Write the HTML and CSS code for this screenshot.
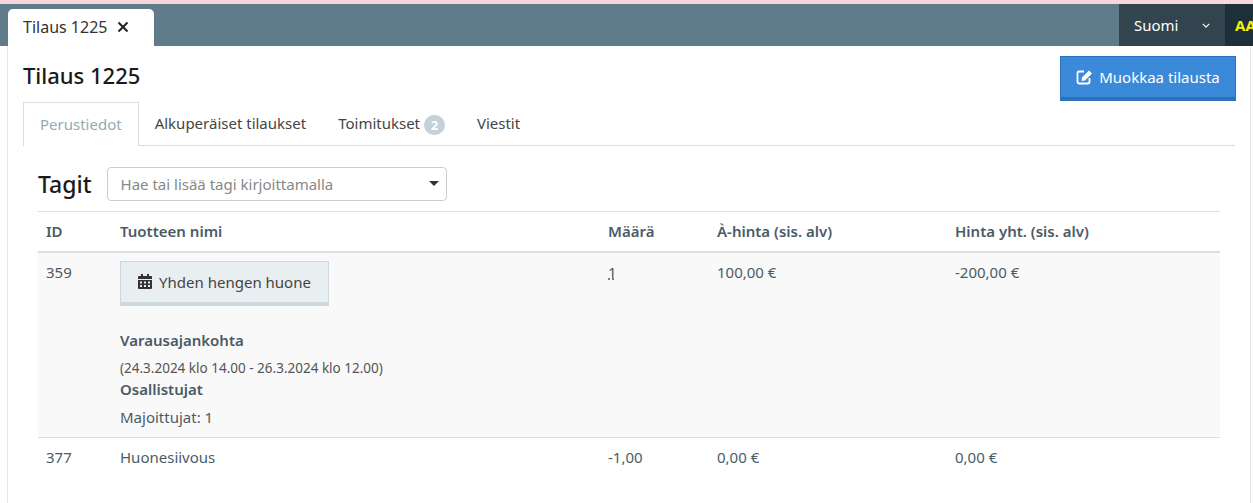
FILE: index.html
```html
<!DOCTYPE html>
<html lang="fi">
<head>
<meta charset="utf-8">
<title>Tilaus 1225</title>
<link rel="stylesheet" href="styles.css">
</head>
<body>
<div class="top-line"></div>
<header class="topbar">
  <div class="window-tab"><span>Tilaus 1225</span><svg class="close" viewBox="0 0 12 12" width="12" height="12"><path d="M1.5 1.5l9 9M10.5 1.5l-9 9" stroke="#222" stroke-width="2" fill="none"/></svg></div>
  <div class="lang"><span>Suomi</span><svg viewBox="0 0 10 6" width="8" height="5"><path d="M1 1l4 4 4-4" stroke="#fff" stroke-width="1.4" fill="none"/></svg></div>
  <div class="aa"><span class="aa-text">AA</span></div>
</header>
<main class="panel">
  <div class="title-row">
    <h1>Tilaus 1225</h1>
    <button class="edit-btn"><svg viewBox="0 0 18 16" width="18" height="16"><path d="M8 2.5H3.2A1.7 1.7 0 0 0 1.5 4.2v8.6a1.7 1.7 0 0 0 1.7 1.7h8.6a1.7 1.7 0 0 0 1.7-1.7V9" stroke="#fff" stroke-width="1.8" fill="none"/><path d="M6 8.6L13 1.6l3 3-7 7-3.4.5z" fill="#fff"/></svg>Muokkaa tilausta</button>
  </div>
  <nav class="tabs">
    <a class="tab active">Perustiedot</a>
    <a class="tab">Alkuperäiset tilaukset</a>
    <a class="tab">Toimitukset <span class="badge">2</span></a>
    <a class="tab">Viestit</a>
  </nav>
  <section class="content">
    <div class="tags">
      <h2>Tagit</h2>
      <div class="select"><span>Hae tai lisää tagi kirjoittamalla</span><i class="caret"></i></div>
    </div>
    <table>
      <colgroup><col class="c1"><col class="c2"><col class="c3"><col class="c4"><col class="c5"></colgroup>
      <thead>
        <tr><th>ID</th><th>Tuotteen nimi</th><th>Määrä</th><th>À-hinta (sis. alv)</th><th>Hinta yht. (sis. alv)</th></tr>
      </thead>
      <tbody>
        <tr class="shaded">
          <td>359</td>
          <td>
            <button class="product-btn"><svg viewBox="0 0 14 15" width="14" height="15"><path fill="#333" fill-rule="evenodd" d="M3 0h2v2h4V0h2v2h2a1 1 0 0 1 1 1v2H0V3a1 1 0 0 1 1-1h2zM0 6h14v8a1 1 0 0 1-1 1H1a1 1 0 0 1-1-1zm2 1.5v2h2v-2zm4 0v2h2v-2zm4 0v2h2v-2zm-8 3.500v2h2v-2zm4 0v2h2v-2zm4 0v2h2v-2z"/></svg>Yhden hengen huone</button>
            <div class="label first">Varausajankohta</div>
            <div class="small">(24.3.2024 klo 14.00 - 26.3.2024 klo 12.00)</div>
            <div class="label">Osallistujat</div>
            <div class="guests">Majoittujat: 1</div>
          </td>
          <td><abbr class="qty">1</abbr></td>
          <td>100,00 €</td>
          <td>-200,00 €</td>
        </tr>
        <tr><td>377</td><td>Huonesiivous</td><td>-1,00</td><td>0,00 €</td><td>0,00 €</td></tr>
      </tbody>
    </table>
  </section>
</main>
</body>
</html>
```
FILE: styles.css
```css
* { box-sizing: border-box; }
html, body { margin: 0; height: 503px; overflow: hidden; }
body { background: #fff; font-family: "Noto Sans", sans-serif; font-size: 15px; color: #4b5b66; }
.top-line { height: 4px; background: #f7d6dc; }
.topbar { height: 42px; background: #607b8a; display: flex; align-items: flex-end; padding-left: 8px; }
.window-tab { width: 146px; height: 37px; background: #fff; border-radius: 5px 5px 0 0; display: flex; align-items: center; gap: 10px; padding: 0 15px 1px; color: #333; font-size: 16px; margin-right: auto; white-space: nowrap; }
.close { flex: none; }
.lang { width: 106px; height: 100%; background: #33444f; color: #fff; display: flex; align-items: center; justify-content: space-between; padding: 0 15px; font-size: 15px; }
.aa { width: 28px; height: 100%; background: #1f2f3a; overflow: hidden; display: flex; align-items: center; padding-left: 10px; }
.aa-text { color: #f4f400; font-weight: 700; font-size: 15px; white-space: nowrap; }
.panel { margin-left: 7px; width: 1244px; border-left: 1px solid #e6e6e6; border-right: 1px solid #e6e6e6; padding: 0 15px 0 15px; height: 457px; overflow: hidden; }
.title-row { display: flex; justify-content: space-between; padding-top: 10px; height: 56px; }
h1 { margin: 5px 0 0; font-size: 22px; font-weight: 500; color: #1a1a1a; line-height: 28px; }
.edit-btn { width: 176px; height: 45px; background: #3b89d9; border: 1px solid #2b72bd; border-bottom-width: 4px; color: #fff; font: inherit; font-size: 15px; display: flex; align-items: center; justify-content: center; gap: 5px; padding: 0; margin-right: -1px; }
.tabs { display: flex; height: 44px; border-bottom: 1px solid #ddd; }
.tab { padding: 0 16px; line-height: 43px; color: #444; font-size: 15px; white-space: nowrap; }
.tab.active { color: #96a9b5; border: 1px solid #ddd; border-bottom: 0; height: 44px; background: #fff; }
.badge { display: inline-block; width: 21px; height: 20px; line-height: 20px; text-align: center; border-radius: 10px; background: #c5d1d8; color: #fff; font-size: 13px; font-weight: 700; vertical-align: -1px; }
.content { padding: 20px 15px 0; }
.tags { display: flex; align-items: center; height: 35px; gap: 15px; }
h2 { margin: 0; font-size: 23px; font-weight: 500; color: #1a1a1a; }
.select { width: 340px; height: 34px; border: 1px solid #ccc; border-radius: 4px; display: flex; align-items: center; justify-content: space-between; padding: 0 7px 0 13px; color: #888; font-size: 15px; }
.caret { width: 0; height: 0; border: 5px solid transparent; border-top-color: #333; border-bottom: 0; }
table { width: 1182px; margin-top: 10px; border-collapse: collapse; table-layout: fixed; }
.c1 { width: 74px; } .c2 { width: 488px; } .c3 { width: 109px; } .c4 { width: 238px; }
th { text-align: left; font-weight: 600; font-size: 15px; height: 40px; padding: 0 8px; border-top: 1px solid #ddd; border-bottom: 2px solid #ddd; color: #4b5b66; }
td { vertical-align: top; padding: 8px; font-size: 15px; line-height: 22px; border-top: 1px solid #ddd; }
.shaded td { background: #f9f9f9; height: 186px; }
.product-btn { width: 209px; height: 45px; background: #e9eef1; border: 1px solid #cdd9e0; border-bottom-width: 4px; display: flex; align-items: center; justify-content: center; gap: 7px; font: inherit; font-size: 15px; color: #444; padding: 0; margin-bottom: 23px; }
.label { font-weight: 600; line-height: 22px; }
.small { font-size: 13.500px; line-height: 20px; margin-top: 7px; color: #555; }
.guests { margin-top: 6px; }
.qty { text-decoration: underline dotted; }
```
